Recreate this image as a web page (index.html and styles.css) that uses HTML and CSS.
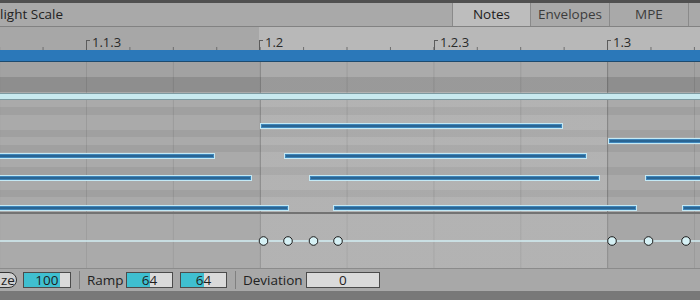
FILE: index.html
```html
<!DOCTYPE html>
<html>
<head>
<meta charset="utf-8">
<link rel="stylesheet" href="styles.css">
</head>
<body>
<div class="app">
  <div class="topline"></div>
  <div class="tabbar">
    <div class="scale-label">light Scale</div>
    <div class="tab active">Notes</div>
    <div class="tab">Envelopes</div>
    <div class="tab">MPE</div>
    <div class="tab rest"></div>
  </div>
  <div class="ruler">
    <div class="marker" style="left:86px">1.1.3</div>
    <div class="marker" style="left:259px">1.2</div>
    <div class="marker" style="left:434px">1.2.3</div>
    <div class="marker" style="left:607px">1.3</div>
  </div>
  <div class="loopbar"></div>
  <div class="grid">
    <div class="row mid"></div>
    <div class="row mid"></div>
    <div class="row deep"></div>
    <div class="row deep"></div>
    <div class="row"></div>
    <div class="row"></div>
    <div class="row shade"></div>
    <div class="row"></div>
    <div class="row"></div>
    <div class="row shade"></div>
    <div class="row"></div>
    <div class="row shade"></div>
    <div class="row"></div>
    <div class="row"></div>
    <div class="row shade"></div>
    <div class="row"></div>
    <div class="row"></div>
    <div class="row shade"></div>
    <div class="row"></div>
    <div class="row"></div>
    <div class="held"></div>
    <div class="note" style="left:260px;width:303px;top:60.75px"></div>
    <div class="note" style="left:608px;width:100px;top:75.75px"></div>
    <div class="note" style="left:-5px;width:220px;top:90.75px"></div>
    <div class="note" style="left:284px;width:303px;top:90.75px"></div>
    <div class="note" style="left:-5px;width:257px;top:113.25px"></div>
    <div class="note" style="left:309px;width:291px;top:113.25px"></div>
    <div class="note" style="left:645px;width:60px;top:113.25px"></div>
    <div class="note" style="left:-5px;width:294px;top:143.25px"></div>
    <div class="note" style="left:333px;width:304px;top:143.25px"></div>
    <div class="note" style="left:682px;width:30px;top:143.25px"></div>
  </div>
  <div class="divider"></div>
  <div class="vel">
    <svg class="vel-svg" width="700" height="54" viewBox="0 0 700 54">
      <line x1="0" y1="27" x2="700" y2="27" stroke="#d2eef3" stroke-width="1.5"/>
      <g fill="#d6f1f5" stroke="#1c1c1c" stroke-width="1">
        <circle cx="263.5" cy="27" r="4.3"/>
        <circle cx="288" cy="27" r="4.3"/>
        <circle cx="313.5" cy="27" r="4.3"/>
        <circle cx="338" cy="27" r="4.3"/>
        <circle cx="612" cy="27" r="4.3"/>
        <circle cx="648.5" cy="27" r="4.3"/>
        <circle cx="686" cy="27" r="4.3"/>
      </g>
    </svg>
  </div>
  <div class="toolbar">
    <div class="pill">ze</div>
    <div class="field first" style="--fill:78.7%">100</div>
    <div class="sep"></div>
    <div class="label ramp">Ramp</div>
    <div class="field" style="--fill:50.4%">64</div>
    <div class="field third" style="--fill:50.4%">64</div>
    <div class="sep"></div>
    <div class="label dev">Deviation</div>
    <div class="field long">0</div>
  </div>
  <div class="bottomline"></div>
  <div class="bottom"></div>
</div>
</body>
</html>
```
FILE: styles.css
```css
* { box-sizing: border-box; }
html, body { margin: 0; padding: 0; }
body {
  width: 700px;
  height: 300px;
  overflow: hidden;
  background: #787878;
  font-family: "Open Sans", "Liberation Sans", sans-serif;
  font-size: 13.5px;
  color: #1e1e1e;
}
.app {
  display: flex;
  flex-direction: column;
  width: 700px;
  height: 300px;
  overflow: hidden;
}
.topline { flex: none; height: 3px; background: #505050; }

.tabbar {
  flex: none;
  display: flex;
  height: 24px;
  background: #a9a9a9;
  border-bottom: 1px solid #828282;
}
.scale-label {
  flex: 1;
  line-height: 23px;
  padding-left: 0;
  color: #232323;
  white-space: nowrap;
}
.tab {
  width: 79px;
  border-left: 1px solid #8a8a8a;
  text-align: center;
  line-height: 23px;
  color: #3c3c3c;
}
.tab.active { width: 78px; background: #bdbdbd; color: #1c1c1c; }
.tab.rest { width: 12px; }

.ruler {
  flex: none;
  position: relative;
  height: 23px;
  background-image:
    linear-gradient(90deg, #6c6c6c 0 1px, transparent 1px),
    linear-gradient(90deg, #a7a7a7 259px, #b8b8b8 259px);
  background-size: 43.43px 3px, 100% 100%;
  background-position: 42.57px 100%, 0 0;
  background-repeat: repeat-x, no-repeat;
}
.marker {
  position: absolute;
  top: 0;
  bottom: 0;
  padding: 7px 0 0 6px;
  font-size: 13px;
  line-height: 16px;
  color: #2a2a2a;
  white-space: nowrap;
}
.marker::before {
  content: "";
  position: absolute;
  left: 0;
  top: 13px;
  bottom: 0;
  width: 3px;
  border-left: 1px solid #5c5c5c;
  border-top: 1px solid #5c5c5c;
}

.loopbar {
  flex: none;
  height: 12px;
  background: #2b78b9;
  border-bottom: 1px solid #1d4a6e;
}

.grid {
  flex: none;
  position: relative;
  height: 150px;
  display: flex;
  flex-direction: column;
  overflow: hidden;
}
.row { flex: none; height: 7.5px; background: #aaaaaa; }
.row.mid { background: #a2a2a2; }
.row.deep { background: #8e8e8e; }
.row.shade { background: #a0a0a0; }
.grid::before {
  content: "";
  position: absolute;
  inset: 0;
  background-image:
    linear-gradient(90deg, rgba(0,0,0,0.2) 0 1px, transparent 1px),
    linear-gradient(90deg, rgba(0,0,0,0.09) 0 1px, transparent 1px),
    linear-gradient(90deg, transparent 259.5px, rgba(255,255,255,0.1) 259.5px, rgba(255,255,255,0.1) 607.5px, transparent 607.5px);
  background-size: 347.43px 100%, 86.86px 100%, 100% 100%;
  background-position: 259.7px 0, 86px 0, 0 0;
  background-repeat: repeat-x, repeat-x, no-repeat;
}
.held {
  position: absolute;
  left: 0;
  right: 0;
  top: 30.5px;
  height: 7px;
  background: #c8e9ef;
  border-top: 1px solid #7d9aa1;
  border-bottom: 1px solid #7d9aa1;
}
.note {
  position: absolute;
  height: 6px;
  border: 1px solid #c4e9f5;
  background: #2a6593;
  box-shadow: inset 0 0 0 1px #3e86bb;
}

.divider { flex: none; height: 2px; background: #737373; }

.vel {
  flex: none;
  height: 54px;
  background-color: #aaaaaa;
  background-image:
    linear-gradient(90deg, rgba(0,0,0,0.15) 0 1px, transparent 1px),
    linear-gradient(90deg, rgba(0,0,0,0.07) 0 1px, transparent 1px),
    linear-gradient(90deg, transparent 259.5px, rgba(255,255,255,0.1) 259.5px, rgba(255,255,255,0.1) 607.5px, rgba(0,0,0,0.02) 607.5px);
  background-size: 347.43px 100%, 86.86px 100%, 100% 100%;
  background-position: 259.7px 0, 86px 0, 0 0;
  background-repeat: repeat-x, repeat-x, no-repeat;
}
.vel-svg { display: block; }

.toolbar {
  flex: none;
  height: 23px;
  display: flex;
  align-items: center;
  background: #a8a8a8;
  border-top: 1px solid #8b8b8b;
  white-space: nowrap;
}
.pill {
  flex: none;
  height: 16px;
  line-height: 14px;
  margin-left: -13px;
  padding: 0 1px 0 13px;
  border: 1px solid #343434;
  border-radius: 8px;
  background: #d0d0d0;
}
.field {
  flex: none;
  width: 47px;
  height: 16px;
  line-height: 14px;
  border: 1px solid #4b4b4b;
  text-align: center;
  background: linear-gradient(90deg, #3fbfd0 var(--fill, 0%), #dadada var(--fill, 0%));
}
.field.first { width: 48px; margin-left: 6px; }
.field.third { margin-left: 7px; }
.field.long { width: 74px; margin-left: 0; }
.sep { flex: none; width: 1px; height: 18px; background: #808080; margin-left: 8px; }
.label { flex: none; color: #222; }
.label.ramp { width: 39px; margin-left: 7px; }
.label.dev { width: 63px; margin-left: 7px; }
```
